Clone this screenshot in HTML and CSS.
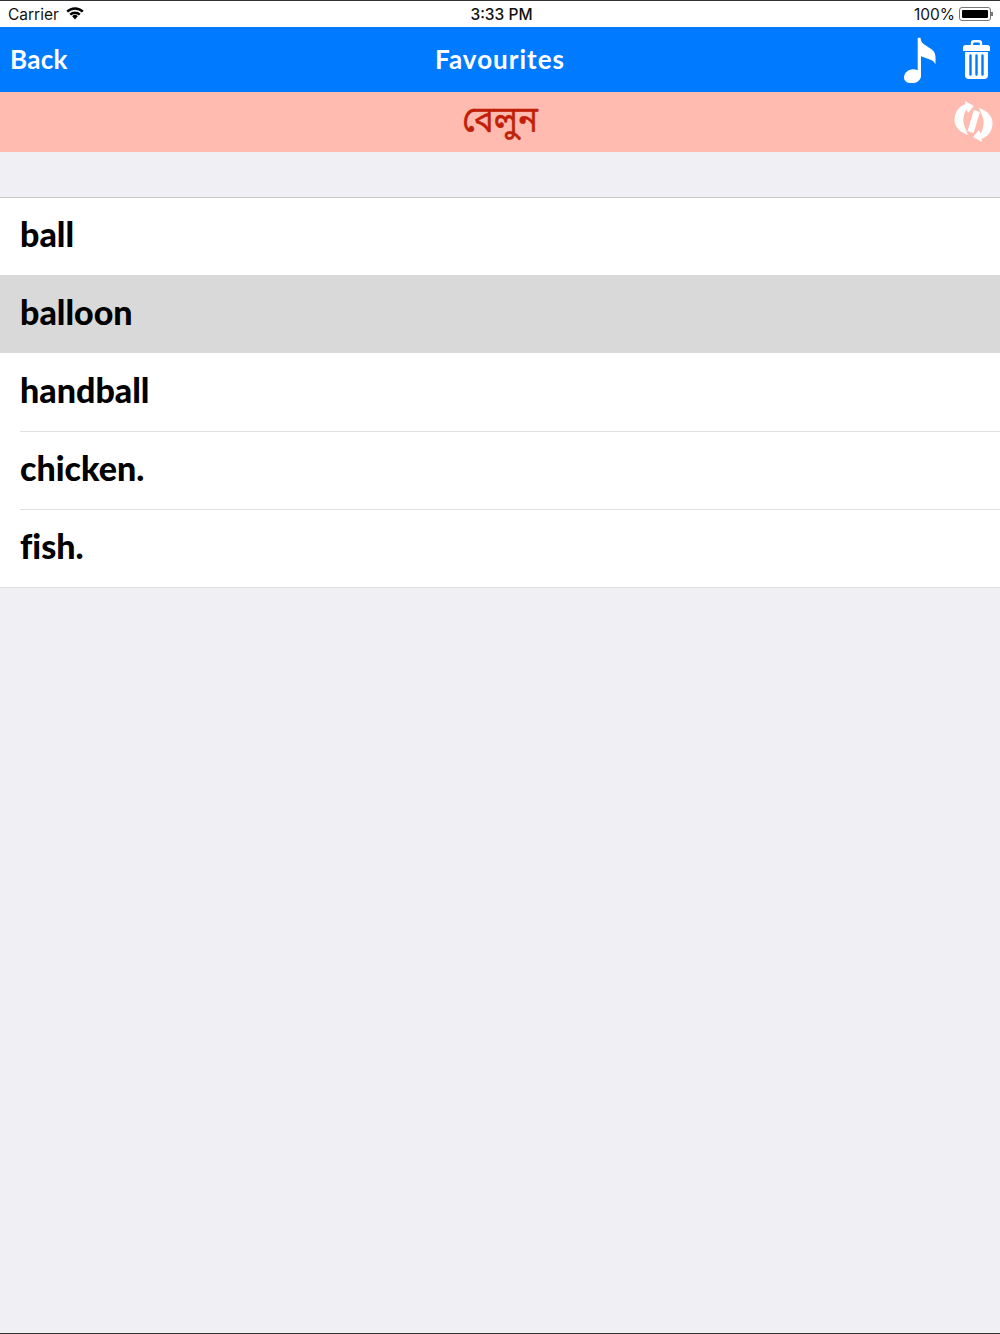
FILE: index.html
```html
<!DOCTYPE html>
<html lang="en">
<head>
  <meta charset="UTF-8">
  <meta name="viewport" content="width=device-width, initial-scale=1.0">
  <title>Favourites</title>
  <link rel="stylesheet" href="styles.css">
</head>
<body>

<div class="statusbar">
  <div class="status-left">
    <span>Carrier</span>
    <svg class="wifi" width="18" height="14" viewBox="0 0 18 14">
      <path d="M9 13.500l-2.800-3.300a4 4 0 0 1 5.600 0z" fill="#000"/>
      <path d="M1.200 5.600a11.200 11.200 0 0 1 15.600 0" fill="none" stroke="#000" stroke-width="2.500"/>
      <path d="M4.200 8.700a6.900 6.900 0 0 1 9.600 0" fill="none" stroke="#000" stroke-width="2.500"/>
    </svg>
  </div>
  <span class="status-time">3:33 PM</span>
  <div class="status-right">
    <span>100%</span>
    <div class="battery"><div class="battery-fill"></div></div>
    <div class="battery-tip"></div>
  </div>
</div>

<div class="navbar">
  <span class="nav-back">Back</span>
  <span class="nav-title">Favourites</span>
  <div class="nav-icons">
    <svg width="34" height="46" viewBox="8 6 34 46">
      <path d="M22.700 6.700h2.800c.5 4.500 2.500 6 6.500 8.500 5 3.200 8.500 5 8.500 11v7c-1.500-2.500-3-3.800-5-4.500l-9.500-3.500v19.500c0 4.500-4.500 7.500-9 7.500-4.500 0-8-1.800-8-5.500 0-5 4.500-8.500 9-8.500 1.700 0 3.200.3 4.700 1z" fill="#fff"/>
    </svg>
    <svg width="27" height="39" viewBox="0 0 27 39">
      <path d="M9 5.500V3C9 1.800 9.800 1.200 11 1.200h5c1.200 0 2 .6 2 1.800v2.500" fill="none" stroke="#fff" stroke-width="2.400"/>
      <path d="M2.500 5h22c1.500 0 2.500 1 2.500 2.500V11H0V7.500C0 6 1 5 2.500 5z" fill="#fff"/>
      <path d="M2 12h23v23.500c0 2-1.500 3.500-3.500 3.500h-16C3.500 39 2 37.500 2 35.500z" fill="#fff"/>
      <path d="M7.500 15.500v19M13.500 15.500v19M19.500 15.500v19" stroke="#007aff" stroke-width="2.400" stroke-linecap="round" fill="none"/>
    </svg>
  </div>
</div>

<div class="wordbar">
  <span class="word">বেলুন</span>
  <svg class="swap" width="55" height="55" viewBox="0 0 55 55">
    <path d="M20 6l9 5-6 7-1.500-3.500C19 18 17.500 24 19 30L23 40C14 37 9 31 9.500 24 10 16 15 11 20.500 9z" fill="#fff"/>
    <path d="M37 47l-9-5 6-7 1.500 3.500C38 35 39.500 29 38 23L34 13c9 3 14 9 13.500 16-.5 8-5.500 13-11 15z" fill="#fff"/>
    <path d="M29 15l6 2-6.500 21-6-2z" fill="#fff"/>
  </svg>
</div>

<div class="list">
  <div class="row"><span>ball</span></div>
  <div class="row selected"><span>balloon</span></div>
  <div class="row"><span>handball</span></div>
  <div class="row"><span>chicken.</span></div>
  <div class="row"><span>fish.</span></div>
</div>

</body>
</html>
```

FILE: styles.css
```css
html,
body {
  margin: 0;
}

body {
  height: 1334px;
  box-sizing: border-box;
  overflow: hidden;
  background-color: #efeff4;
  font-family: Lato, "Noto Sans", sans-serif;
  border-top: 1px solid #333;
  border-bottom: 1px solid #333;
}

/* Status bar */
.statusbar {
  display: grid;
  grid-template-columns: 1fr auto 1fr;
  align-items: center;
  height: 26px;
  padding: 0 7px 0 8px;
  background-color: #fff;
  font-family: Inter, "Liberation Sans", sans-serif;
  font-size: 15.5px;
  color: #111;
}

.status-left,
.status-right {
  display: flex;
  align-items: center;
}

.status-left {
  gap: 7px;
}

.status-right {
  justify-content: flex-end;
}

.status-time {
  font-weight: 500;
  margin-left: 2px;
}

.wifi {
  margin-top: -2px;
}

.battery {
  width: 32px;
  height: 14px;
  margin-left: 4px;
  padding: 2px;
  box-sizing: border-box;
  border: 1px solid #777;
  border-radius: 3px;
}

.battery-fill {
  height: 100%;
  background-color: #000;
  border-radius: 1px;
}

.battery-tip {
  width: 2px;
  height: 4px;
  background-color: #777;
}

/* Navigation bar */
.navbar {
  display: grid;
  grid-template-columns: 1fr auto 1fr;
  align-items: center;
  height: 65px;
  padding: 0 11px;
  background-color: #007aff;
  color: #fff;
  font-size: 26px;
  font-weight: 700;
}

.nav-back,
.nav-title {
  margin-bottom: 2px;
}

.nav-back {
  margin-left: -1px;
  letter-spacing: 0.3px;
}

.nav-title {
  letter-spacing: 1px;
}

.nav-icons {
  display: flex;
  justify-content: flex-end;
  align-items: center;
  gap: 26px;
  margin-right: -1px;
}

/* Word bar */
.wordbar {
  position: relative;
  display: flex;
  justify-content: center;
  align-items: center;
  height: 60px;
  background-color: #ffbbaf;
}

.word {
  font-family: "Noto Sans Bengali", "Noto Sans", sans-serif;
  font-size: 33px;
  color: #c11f08;
  -webkit-text-stroke: 0.4px #c11f08;
  transform: scaleY(1.1);
}

.swap {
  position: absolute;
  right: 0;
  top: 3px;
}

/* Word list */
.list {
  margin-top: 45px;
  background-color: #fff;
  border-bottom: 1px solid #dcdce0;
}

.row {
  display: flex;
  box-sizing: border-box;
  height: 78px;
  font-size: 34px;
  font-weight: 900;
  font-variant-ligatures: none;
  color: #000;
}

.row:first-child {
  border-top: 1px solid #c8c7cc;
}

.row span {
  flex: 1;
  display: flex;
  align-items: center;
  margin-left: 20px;
  padding-bottom: 7px;
  box-sizing: border-box;
  border-top: 1px solid transparent;
}

.row:first-child span {
  border-top: 0;
}

.row:nth-child(n+4) span {
  border-top-color: #e0e0e3;
}

.selected {
  background-color: #d9d9d9;
}
```
